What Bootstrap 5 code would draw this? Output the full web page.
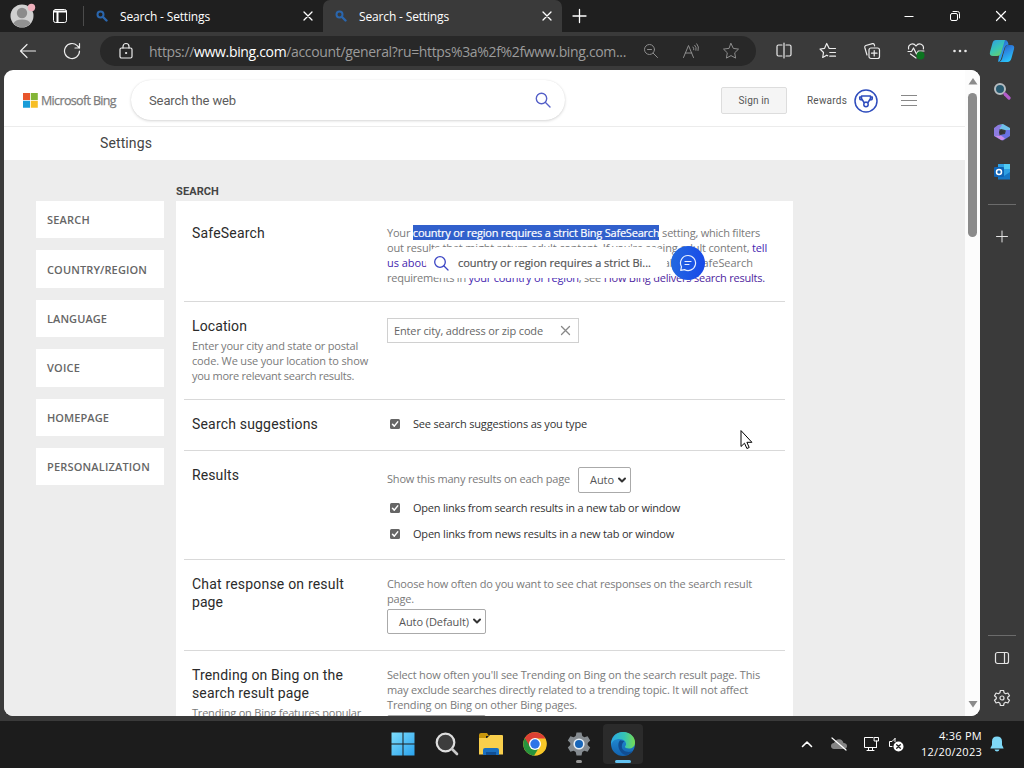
<!DOCTYPE html>
<html lang="en">
<head>
    <meta charset="UTF-8" />
    <meta name="viewport" content="width=device-width, initial-scale=1.0" />
    <title>Search - Settings</title>
    <link href="https://cdn.jsdelivr.net/npm/bootstrap@5.3.3/dist/css/bootstrap.min.css" rel="stylesheet" />
    <style>
        body {
            width: 1024px;
            height: 768px;
            overflow: hidden;
            background: #3a3a3a;
            font-family: "Open Sans", "Noto Sans", sans-serif;
            font-size: 11px;
            line-height: 15px;
            color: #7a7a7a;
        }

        svg {
            display: block;
            flex: none;
            fill: none;
            stroke-linecap: round;
            stroke-linejoin: round;
        }

        [data-w] {
            white-space: nowrap;
        }

        /* browser frame */
        .tab-strip {
            height: 32px;
            background: #1f1f1f;
            color: #fff;
            stroke: #fff;
            font-size: 12px;
        }

        .tab-strip svg, .tool-bar svg, .side-bar svg, .task-bar svg { stroke: inherit; }

        .browser-tab {
            width: 239px;
            height: 32px;
            padding: 0 9px 0 12px;
        }

        .browser-tab.current {
            background: #3a3a3a;
            border-radius: 7px 7px 0 0;
        }

        .tab-rule { width: 1px; height: 20px; background: #4b4b4b; }
        .slot46 { width: 46px; }
        .slot44 { width: 44px; }
        .slot40 { width: 40px; }

        .slot46, .slot44, .slot40 {
            flex: none;
            display: flex;
            align-items: center;
            justify-content: center;
        }

        .tool-bar {
            height: 38px;
            padding-left: 6px;
            stroke: #ececec;
        }

        .address-bar {
            width: 656px;
            height: 30px;
            margin-left: 6px;
            padding: 0 5px 0 18px;
            border-radius: 15px;
            background: #282828;
            color: #9b9b9b;
            font-size: 14px;
        }

        .address-bar b { font-weight: 400; color: #fff; }

        .view-port {
            width: 976px;
            height: 646px;
            margin-left: 4px;
            border-radius: 9px;
            background: #fff;
            overflow: hidden;
        }

        .side-bar { width: 44px; stroke: #e4e4e4; }
        .side-bar .side-rule { width: 28px; height: 1px; background: #6b6b6b; }

        /* bing header */
        .bing-head {
            height: 57px;
            padding-left: 19px;
            border-bottom: 1px solid #ececec;
        }

        .brand-text { font-size: 12.5px; color: #7c7c7c; -webkit-text-stroke: .25px #7c7c7c; }

        .search-box {
            width: 434px;
            height: 40px;
            margin-left: 15px;
            padding: 0 14px 0 18px;
            border-radius: 20px;
            box-shadow: 0 0 1px rgba(0, 0, 0, .1), 0 1px 3px rgba(0, 0, 0, .16);
            font: 13px Roboto, sans-serif;
            color: #5c5c5c;
        }

        .sign-in {
            width: 66px;
            height: 27px;
            margin-left: 156px;
            padding: 0;
            border: 1px solid #ddd;
            border-radius: 2px;
            background: #f5f5f5;
            font: 10px Roboto, sans-serif;
            color: #555;
        }

        .rewards { margin-left: 20px; font: 10px Roboto, sans-serif; color: #555; }

        .page-title {
            height: 33px;
            padding-left: 96px;
            font: 14px/32px Roboto, sans-serif;
            color: #444;
        }

        /* settings page */
        .page-body { width: 961px; height: 556px; background: #ededed; padding: 23px 0 0 32px; overflow: hidden; }
        .side-nav { width: 128px; margin-top: 18px; }

        .side-nav a {
            height: 37.4px;
            margin-bottom: 12px;
            padding-left: 11px;
            background: #fff;
            color: #666;
            font-size: 11px;
            font-weight: 600;
            text-decoration: none;
            display: flex;
            align-items: center;
        }

        .group-name { height: 18px; font: 700 11px/17px Roboto, sans-serif; color: #444; }
        .panel { width: 617px; background: #fff; padding: 0 8px; }

        .setting {
            border-bottom: 1px solid #d9d9d9;
            padding-left: 8px;
            overflow: hidden;
        }

        .setting .what { width: 195px; flex: none; margin-top: -1px; }

        .setting h2 {
            margin: 0;
            font: 14px/18px Roboto, sans-serif;
            color: #2b2b2b;
        }

        .h-safe { height: 101px; padding-top: 24px; }
        .h-loc { height: 98px; padding-top: 16px; }
        .h-sug { height: 51px; padding-top: 16px; }
        .h-res { height: 109px; padding-top: 16px; }
        .h-chat { height: 91px; padding-top: 16px; }
        .h-trend { height: 120px; padding-top: 16px; }

        .picked { background: #3160cc; color: #fff; }
        .picked, .hint-text { -webkit-text-stroke: .2px; }
        .lnk { color: #4526b0; }
        .lnk.visited { color: #4f1fa0; }

        .city-box {
            width: 192px;
            height: 25px;
            border: 1px solid #d0d0d0;
            padding: 0 7px 0 6px;
            color: #666;
        }

        .pick-list {
            height: 26px;
            border: 1px solid #aaa;
            border-radius: 2px;
            padding: 0 3px 1px 11px;
            color: #555;
            background: #fff;
        }

        .check-line { color: #333; gap: 13px; padding-left: 3px; }

        .tick {
            width: 10px;
            height: 10px;
            margin-top: 1px;
            border-radius: 1.5px;
            background: #666;
        }

        /* search bubble over the selected text */
        .hint {
            position: absolute;
            left: 426px;
            top: 247px;
            width: 241px;
            height: 31px;
            padding: 0 7px;
            gap: 9px;
            border-radius: 14px;
            background: #fff;
            color: #555;
        }

        .chat-dot {
            position: absolute;
            left: 671px;
            top: 246px;
            width: 34px;
            height: 34px;
            border-radius: 50%;
            background: linear-gradient(100deg, #246bdf, #1747ea);
        }

        .pointer { position: absolute; left: 740px; top: 430px; }

        .scroller { width: 15px; padding-top: 8px; background: #fcfcfc; }
        .scroller path { fill: #8b8b8b; }
        .scroller .thumb { width: 9px; height: 144px; border-radius: 5px; background: #8b8b8b; margin-top: 8px; }

        /* taskbar */
        .task-bar {
            height: 47px;
            margin-top: 5px;
            padding: 0 0 1px 381px;
            background: #1c1c1c;
            stroke: #fff;
        }

        .app-tile { width: 40px; height: 40px; border-radius: 4px; background: #2b2b2b; }
        .app-bar { width: 16px; height: 3px; border-radius: 2px; background: #62c1f0; }
        .clock { width: 74px; color: #fff; font-size: 11px; line-height: 16px; }
    </style>
</head>
<body class="d-flex flex-column">

<!-- Tabs -->
<div class="tab-strip d-flex align-items-center">
    <svg width="83" height="32">
        <circle cx="22" cy="16" r="11.5" fill="#d0d0d0" stroke="none"/>
        <circle cx="22" cy="13" r="5.2" fill="#8b8b8b" stroke="none"/>
        <path d="M13.5 23.5q1.500-4 8.500-4t8.500 4a11.500 11.500 0 0 1-17 0z" fill="#929292" stroke="none"/>
        <circle cx="31.500" cy="7.500" r="3.700" fill="#efb0bc" stroke="none"/>
        <rect x="53.500" y="9.500" width="13" height="13" rx="2"/>
        <path d="M54 11.500h12M57.500 12v10" stroke-width="2"/>
    </svg>
    <div class="tab-rule"></div>
    <div class="browser-tab d-flex align-items-center">
        <svg width="12" height="12" style="stroke:#2a66ad"><circle cx="4.500" cy="4.500" r="3" stroke-width="2"/><path d="M7 7l3.500 3.500" stroke-width="2.400"/></svg>
        <span class="ms-2 ps-1" data-w="94">Search - Settings</span>
        <svg class="ms-auto" width="12" height="12"><path d="M2 2l8 8M10 2l-8 8" stroke-width="1.300"/></svg>
    </div>
    <div class="browser-tab current d-flex align-items-center">
        <svg width="12" height="12" style="stroke:#2a66ad"><circle cx="4.500" cy="4.500" r="3" stroke-width="2"/><path d="M7 7l3.500 3.500" stroke-width="2.400"/></svg>
        <span class="ms-2 ps-1" data-w="94">Search - Settings</span>
        <svg class="ms-auto" width="12" height="12"><path d="M2 2l8 8M10 2l-8 8" stroke-width="1.300"/></svg>
    </div>
    <svg class="ms-2" width="18" height="18"><path d="M9.500 2.500v13M3 9h13" stroke-width="1.300"/></svg>
    <div class="d-flex ms-auto">
        <div class="slot46"><svg width="12" height="12"><path d="M1.500 6.500h9" stroke-linecap="butt"/></svg></div>
        <div class="slot46"><svg width="12" height="12"><rect x="1.500" y="3.500" width="7" height="7" rx="1.500"/><path d="M4 1.500h4.500a2 2 0 0 1 2 2V8"/></svg></div>
        <div class="slot46"><svg width="12" height="12"><path d="M1.500 1.500l9 9M10.500 1.500l-9 9" stroke-width="1.200"/></svg></div>
    </div>
</div>

<!-- Toolbar -->
<div class="tool-bar d-flex align-items-center">
    <div class="slot44"><svg width="18" height="16"><path d="M16.500 8H1.500M8 1.500L1.500 8 8 14.500" stroke-width="1.200"/></svg></div>
    <div class="slot44"><svg width="18" height="18"><path d="M16.500 9a7.500 7.500 0 1 1-2.300-5.400L16.500 6M16.500 1.500V6H12" stroke-width="1.200"/></svg></div>
    <div class="address-bar d-flex align-items-center">
        <svg width="16" height="18"><rect x="2" y="6" width="12" height="10" rx="1.500" stroke-width="1.200"/><path d="M5 6V4.500a3 3 0 0 1 6 0V6" stroke-width="1.200"/><circle cx="8" cy="11" r=".6" fill="#fff"/></svg>
        <span style="margin-left:15px" data-w="477">https://<b>www.bing.com</b>/account/general?ru=https%3a%2f%2fwww.bing.com...</span>
        <div class="d-flex ms-auto" style="stroke:#8d8d8d">
            <div class="slot40"><svg width="16" height="16"><circle cx="6.500" cy="6.500" r="5"/><path d="M4.500 6.500h4M10.200 10.200l4.300 4.300"/></svg></div>
            <div class="slot40"><svg width="18" height="16"><path d="M1.500 14.500L6.500 2.500 11.500 14.500M3.300 10h6.500M11 4q1 1 .8 2.800M12.800 2.300q2 2 1.200 5M14.800.8q2.600 3 1.300 6.700"/></svg></div>
            <div class="slot40"><svg width="18" height="18"><path d="M9 1.500l2.300 4.900 5.200.7-3.800 3.700.9 5.300L9 13.600l-4.600 2.500.9-5.300L1.500 7.100l5.200-.7z"/></svg></div>
        </div>
    </div>
    <div class="d-flex" style="margin-left:6px">
        <div class="slot44"><svg width="16" height="18"><path d="M6 3H2.500Q1 3 1 4.500v8Q1 14 2.500 14H6M10 3h3.500Q15 3 15 4.500v8q0 1.500-1.500 1.500H10M8 1v15" stroke-width="1.200"/></svg></div>
        <div class="slot44"><svg width="18" height="18"><path d="M16.500 6.500H10.200L7.700 1.500 5.600 6.300 1 7l3.500 3.500-.8 5 4-2.300 1 .6M10.800 10.500h5.700M10.800 14.200h5.700" stroke-width="1.200"/></svg></div>
        <div class="slot44"><svg width="18" height="18"><rect x="6" y="6" width="10.500" height="10.500" rx="2" stroke-width="1.200"/><path d="M11.200 8.500v5.500M8.500 11.200H14M4 13L1.800 5.500q-.4-1.500 1-2L9.500 1.600q1.300-.3 1.800 1l.3 1.200" stroke-width="1.200"/></svg></div>
        <div class="slot44"><svg width="18" height="18"><path d="M1.600 7C.8 2.500 6-.2 9 4c3-4.200 8.200-1.500 7.400 3M1 9.500h3.500L6.500 6l3 6 1.700-3H17M3.500 12L9 16" stroke-width="1.200"/><circle cx="13.500" cy="13.500" r="4" fill="#0c7520" stroke="none"/></svg></div>
        <div class="slot44"><svg width="16" height="4" style="stroke:none;fill:#e8e8e8"><circle cx="2.500" cy="2" r="1.300"/><circle cx="8" cy="2" r="1.300"/><circle cx="13.500" cy="2" r="1.300"/></svg></div>
        <div class="slot40"><svg width="26" height="26" style="stroke:none">
            <defs>
                <linearGradient id="cpA" x2=".6" y2="1"><stop stop-color="#2f9be8"/><stop offset=".6" stop-color="#39c6b4"/><stop offset="1" stop-color="#65cc70"/></linearGradient>
                <linearGradient id="cpB" x2=".5" y2="1"><stop stop-color="#174e9c"/><stop offset=".4" stop-color="#2d7ddd"/><stop offset="1" stop-color="#29c2f8"/></linearGradient>
            </defs>
            <path d="M13 2h3q2 0 2.800 2l.8 2.500q-3 .2-4 3L12 21q-1 3-3 3z" fill="url(#cpB)"/>
            <path d="M7 2h9l-4 13q-1 3-4 3H4q-4 0-3-4L3.500 5Q4.300 2 7 2z" fill="url(#cpA)"/>
            <path d="M18 7h4q4 0 3 4l-2.500 9q-1 4-4 4H10q2 0 3-3l3-11q.7-3 2-3z" fill="url(#cpB)"/>
        </svg></div>
    </div>
</div>

<!-- Page and side bar -->
<div class="d-flex">
    <div class="view-port d-flex">
        <div>
            <div class="bing-head d-flex align-items-center">
                <svg width="15" height="15" style="margin-top:4px"><path fill="#e8562c" d="M0 0h7v7H0z"/><path fill="#83b536" d="M7.800 0h7v7h-7z"/><path fill="#199cd8" d="M0 7.800h7v7H0z"/><path fill="#f7be25" d="M7.800 7.800h7v7h-7z"/></svg>
                <div class="brand-text" style="margin:4px 0 0 3px" data-w="75">Microsoft Bing</div>
                <div class="search-box d-flex align-items-center mt-1">
                    <span data-w="87">Search the web</span>
                    <svg class="ms-auto" width="16" height="16" stroke="#5560c8" stroke-width="1.400"><circle cx="6.500" cy="6.500" r="5.200"/><path d="M10.500 10.500l4.500 4.500"/></svg>
                </div>
                <button class="sign-in" style="margin-top:5px"><span data-w="31">Sign in</span></button>
                <div class="rewards d-flex align-items-center" style="margin-top:5px">
                    <span data-w="40">Rewards</span>
                    <svg style="margin-left:7px" width="24" height="24" stroke="#2f4dbd" stroke-width="1.500"><circle cx="12" cy="12" r="11"/><path d="M7.500 7h9v2.500l-2.500 4h-4l-2.500-4zM7.500 8H5.700v1.500q0 1.500 2.300 1.500M16.500 8h1.800v1.500q0 1.500-2.300 1.500"/><circle cx="12" cy="15.500" r="2.200" fill="#fff"/></svg>
                    <svg style="margin-left:23px" width="16" height="13" stroke="#888" stroke-width="1.200"><path d="M.5 1.500h15M.5 6.500h15M.5 11.500h15"/></svg>
                </div>
            </div>
            <div class="page-title"><span data-w="52">Settings</span></div>

            <div class="page-body d-flex">
                <nav class="side-nav">
                    <a href="#"><span data-w="43">SEARCH</span></a>
                    <a href="#"><span data-w="100">COUNTRY/REGION</span></a>
                    <a href="#"><span data-w="60">LANGUAGE</span></a>
                    <a href="#"><span data-w="33">VOICE</span></a>
                    <a href="#"><span data-w="62">HOMEPAGE</span></a>
                    <a href="#"><span data-w="103">PERSONALIZATION</span></a>
                </nav>
                <div style="margin-left:12px">
                    <div class="group-name"><span data-w="43">SEARCH</span></div>
                    <div class="panel">
                        <div class="setting h-safe d-flex">
                            <div class="what"><h2><span data-w="73">SafeSearch</span></h2></div>
                            <div>
                                <div><span data-w="373">Your <span class="picked">country or region requires a strict Bing SafeSearch</span> setting, which filters</span></div>
                                <div><span data-w="380">out results that might return adult content. If you're seeing adult content, <span class="lnk">tell</span></span></div>
                                <div><span data-w="366"><span class="lnk">us about</span> it so we can filter it in the future. Learn more about SafeSearch</span></div>
                                <div><span data-w="378">requirements in <span class="lnk">your country or region</span>, see <span class="lnk visited">How Bing delivers search results.</span></span></div>
                            </div>
                        </div>
                        <div class="setting h-loc d-flex">
                            <div class="what">
                                <h2><span data-w="55">Location</span></h2>
                                <div style="margin-top:3px"><span data-w="166">Enter your city and state or postal</span></div>
                                <div><span data-w="176">code. We use your location to show</span></div>
                                <div><span data-w="162">you more relevant search results.</span></div>
                            </div>
                            <div class="city-box d-flex align-items-center">
                                <span data-w="149">Enter city, address or zip code</span>
                                <svg class="ms-auto" width="11" height="11" stroke="#888" stroke-width="1.300"><path d="M1.500 1.500l8 8M9.500 1.500l-8 8"/></svg>
                            </div>
                        </div>
                        <div class="setting h-sug d-flex">
                            <div class="what"><h2><span data-w="126">Search suggestions</span></h2></div>
                            <div class="check-line d-flex align-items-center align-self-start">
                                <div class="tick"><svg width="10" height="10" stroke="#fff" stroke-width="1.500"><path d="M2.500 5.300l1.800 1.800 3.400-4.200"/></svg></div>
                                <span data-w="174">See search suggestions as you type</span>
                            </div>
                        </div>
                        <div class="setting h-res d-flex">
                            <div class="what"><h2><span data-w="47">Results</span></h2></div>
                            <div>
                                <div class="d-flex align-items-center">
                                    <span class="pb-1" data-w="183">Show this many results on each page</span>
                                    <div class="pick-list d-flex align-items-center justify-content-between ms-2" style="width:53px"><span data-w="24">Auto</span><svg width="10" height="8" stroke="#333" stroke-width="2"><path d="M2 2.500l3 3 3-3"/></svg></div>
                                </div>
                                <div class="check-line d-flex align-items-center" style="margin-top:7px">
                                    <div class="tick"><svg width="10" height="10" stroke="#fff" stroke-width="1.500"><path d="M2.500 5.300l1.800 1.800 3.400-4.200"/></svg></div>
                                    <span data-w="267">Open links from search results in a new tab or window</span>
                                </div>
                                <div class="check-line d-flex align-items-center" style="margin-top:11px">
                                    <div class="tick"><svg width="10" height="10" stroke="#fff" stroke-width="1.500"><path d="M2.500 5.300l1.800 1.800 3.400-4.200"/></svg></div>
                                    <span data-w="261">Open links from news results in a new tab or window</span>
                                </div>
                            </div>
                        </div>
                        <div class="setting h-chat d-flex">
                            <div class="what">
                                <h2><span data-w="152">Chat response on result</span></h2>
                                <h2><span data-w="31">page</span></h2>
                            </div>
                            <div>
                                <div><span data-w="365">Choose how often do you want to see chat responses on the search result</span></div>
                                <div><span data-w="27">page.</span></div>
                                <div class="pick-list d-flex align-items-center justify-content-between" style="width:99px;height:25px;margin-top:3px"><span data-w="70">Auto (Default)</span><svg width="10" height="8" stroke="#333" stroke-width="2"><path d="M2 2.500l3 3 3-3"/></svg></div>
                            </div>
                        </div>
                        <div class="setting h-trend d-flex">
                            <div class="what">
                                <h2><span data-w="151">Trending on Bing on the</span></h2>
                                <h2><span data-w="117">search result page</span></h2>
                                <div style="margin-top:3px"><span data-w="169">Trending on Bing features popular</span></div>
                            </div>
                            <div>
                                <div><span data-w="373">Select how often you'll see Trending on Bing on the search result page. This</span></div>
                                <div><span data-w="361">may exclude searches directly related to a trending topic. It will not affect</span></div>
                                <div><span data-w="190">Trending on Bing on other Bing pages.</span></div>
                                <div class="pick-list" style="width:99px;margin-top:3px"></div>
                            </div>
                        </div>
                    </div>
                </div>
            </div>
        </div>
        <div class="scroller d-flex flex-column align-items-center">
            <svg width="10" height="7"><path d="M5 0l4.500 6.500h-9z"/></svg>
            <div class="thumb"></div>
            <svg class="mt-auto mb-2" width="10" height="7"><path d="M5 6.500L.5 0h9z"/></svg>
        </div>
    </div>

    <div class="side-bar d-flex flex-column align-items-center">
        <svg style="margin-top:12px" width="18" height="18"><circle cx="7" cy="7" r="5" stroke="#b6bcc0" stroke-width="2" fill="#285a70"/><path d="M12 12l4 4" stroke="#b45ccb" stroke-width="3.200"/></svg>
        <svg style="margin-top:23px;stroke:none" width="18" height="18">
            <path d="M5 2l5-1 7 4v5l-5-3-4-1-3 3z" fill="#6fc0ea"/>
            <path d="M5 2L1 5v8l7 4 1-4-3-3 1-5 2-3z" fill="#8c7be0"/>
            <path d="M17 7v6l-7 4.500-7-4 4-1.500 5-1 1-4z" fill="#6a72e2"/>
            <path d="M2 13l7 4.500 3-2-4-3z" fill="#c98be8"/>
            <path d="M6.500 6l5 3-5 3.500z" fill="#333"/>
        </svg>
        <svg style="margin-top:22px;stroke:none" width="18" height="18">
            <path d="M5 1h12v15H5z" fill="#2e9fe2"/><path d="M11 1h6v5h-6z" fill="#50cbf4"/><path d="M5 10l6 3 6-4v7.500H5z" fill="#1576c4"/>
            <rect x="1" y="4" width="10" height="10" rx="1" fill="#0f63b4"/><circle cx="6" cy="9" r="2.500" stroke="#fff" stroke-width="1.500"/>
        </svg>
        <div class="side-rule" style="margin-top:23px"></div>
        <svg style="margin-top:25px" width="13" height="13"><path d="M6 1v11M.5 6.500h11"/></svg>
        <div class="side-rule" style="margin-top:392px"></div>
        <svg style="margin-top:15px" width="16" height="14"><rect x="1.500" y="1.500" width="13" height="11" rx="2" stroke-width="1.200"/><path d="M10.500 1.500v11" stroke-width="1.200"/></svg>
        <svg style="margin-top:24px" width="18" height="18" stroke-width="1.200"><path d="M7.400 1.500h3.200l.5 2.300 1.500.9 2.300-.7 1.600 2.700-1.800 1.600v1.400l1.800 1.600-1.600 2.700-2.300-.7-1.500.9-.5 2.300H7.400l-.5-2.300-1.500-.9-2.300.7-1.600-2.700 1.800-1.600V8.300L1.500 6.700 3.100 4l2.300.7 1.500-.9z"/><circle cx="9" cy="9" r="2"/></svg>
    </div>
</div>

<!-- Taskbar -->
<div class="task-bar d-flex align-items-center">
    <div class="slot44"><svg width="24" height="24" style="stroke:none"><defs><linearGradient id="win" x2="1" y2="1"><stop stop-color="#7ddcfb"/><stop offset="1" stop-color="#2aa3ee"/></linearGradient></defs><path fill="url(#win)" d="M.5.500h11v11H.5zM12.500.500h11v11h-11zM.5 12.500h11v11H.5zM12.500 12.500h11v11h-11z"/></svg></div>
    <div class="slot44"><svg width="24" height="24"><circle cx="10.500" cy="10.500" r="8.800" fill="#3d3d3d" stroke="#dedede" stroke-width="2.200"/><path d="M17 17l5 5" stroke="#c9c9c9" stroke-width="2.600"/></svg></div>
    <div class="slot44"><svg width="26" height="24" style="stroke:none"><path d="M1 3q0-2 2-2h6l2 3h-3v4H1z" fill="#c8960c"/><path d="M1 6h8l3-3h12q1 0 1 1v18.500H1z" fill="#f9cf4c"/><path d="M5 23v-5q0-2 2-2h12q2 0 2 2v5z" fill="#1a6fc0"/><path d="M8 20h10v3H8z" fill="#114f94"/></svg></div>
    <div class="slot44"><svg width="24" height="24" style="stroke:none"><circle cx="12" cy="12" r="11.800" fill="#f8c828"/><path d="M12 12L1.800 6.100A11.800 11.800 0 0 0 11 23.700l5.500-9z" fill="#27933d"/><path d="M1.800 6.100A11.800 11.800 0 0 1 22.500 6.500H12L7 14.500z" fill="#dc4034"/><circle cx="12" cy="12" r="6" fill="#fff"/><circle cx="12" cy="12" r="4.700" fill="#2d74e8"/></svg></div>
    <div class="slot44 flex-column">
        <svg style="margin-top:7px;stroke:none" width="24" height="24"><path d="M9.500.500h5l.8 3.500 2 1.200 3.300-1 2.600 4.300-2.500 2.500v2l2.500 2.500-2.600 4.300-3.300-1-2 1.200-.8 3.500h-5L8.700 20l-2-1.200-3.300 1L.8 15.500 3.300 13v-2L.8 8.500l2.600-4.300 3.300 1 2-1.200z" fill="#858b90"/><circle cx="12" cy="12" r="5.600" fill="#e6eef5"/><circle cx="12" cy="12" r="4" fill="#1765b8"/></svg>
        <svg style="margin-top:4px;stroke:none" width="6" height="3"><rect width="6" height="3" rx="1.500" fill="#969696"/></svg>
    </div>
    <div class="slot44"><div class="app-tile d-flex flex-column align-items-center">
        <svg style="margin-top:7px;stroke:none" width="26" height="26">
            <defs>
                <linearGradient id="egA" y2="0"><stop stop-color="#2aa8e4"/><stop offset=".55" stop-color="#35c4b4"/><stop offset="1" stop-color="#76dc51"/></linearGradient>
                <linearGradient id="egB" x2="0" y2="1"><stop stop-color="#2695db"/><stop offset="1" stop-color="#1262af"/></linearGradient>
            </defs>
            <circle cx="13" cy="13" r="12" fill="url(#egB)"/>
            <path d="M1.200 11C2.500 4.500 7 1 13 1c8 0 12 5.500 12 10.500 0 4-3 6-6 6-2.500 0-4.500-1-4-2 1-1.300 1.200-2 1-3C15.500 9.500 13 8 9.500 8 5 8 2 10 1.200 14z" fill="url(#egA)"/>
            <path d="M10 9.200c-3 3.500-2 10 3 13.800 4 2 7 .5 9.800-3-4 2-11 .8-11-4.500 0-2.500 1.200-4.500 2.700-5.500z" fill="#114d92"/>
        </svg>
        <div class="app-bar" style="margin-top:3px"></div>
    </div></div>

    <div class="d-flex align-items-center ms-auto" style="margin-right:20px">
        <svg width="12" height="8"><path d="M1.500 6.500L6 2l4.500 4.500" stroke-width="1.600"/></svg>
        <svg style="margin-left:17px" width="18" height="14"><path d="M4 12q-3-.3-3-3t3-3q1.500-3.800 5-3.800T13.500 6q3.500.3 3.500 3t-3 3z" fill="#858585" stroke="none"/><path d="M2 1l14 12" stroke-width="1.200"/></svg>
        <svg style="margin-left:14px" width="18" height="18"><path d="M11 2.500H2.500v10h12V9M5 15.500h7M6.500 13v2.500M10.500 13v2.500M12.500 2.500h4v3.500h-4zM14.500 6v6.500"/></svg>
        <svg style="margin-left:8px" width="16" height="16"><path d="M7 2.500L4 5.500H1.500v5H4M7 2.500v3"/><circle cx="10.500" cy="10.500" r="5" fill="#fff" stroke="none"/><path d="M8.700 8.700l3.600 3.600M12.300 8.700l-3.600 3.600" stroke="#222" stroke-width="1.300"/></svg>
        <div class="clock text-end" style="margin-left:4px"><div><span data-w="43">4:36 PM</span></div><div><span data-w="61">12/20/2023</span></div></div>
        <svg style="margin-left:8px;stroke:none" width="14" height="16"><path d="M7 .5Q2 .5 2 5.500v3.500L.5 12v.5h13V12L12 9V5.500Q12 .5 7 .5zM4.500 13.500Q5 15.500 7 15.500t2.500-2z" fill="#7fd8f6"/></svg>
    </div>
</div>

<!-- Overlays -->
<div class="hint d-flex align-items-center">
    <svg width="16" height="16" stroke="#3b45c4" stroke-width="1.300"><circle cx="7" cy="7" r="5.300"/><path d="M11 11l4 4"/></svg>
    <span class="hint-text" data-w="193">country or region requires a strict Bi...</span>
</div>
<div class="chat-dot d-flex align-items-center justify-content-center">
    <svg width="18" height="18" stroke="#e8f0ff" stroke-width="1.200"><path d="M9 1.500a7.500 7.500 0 1 1-3.500 14.100L1.700 16.400l.8-3.700A7.500 7.500 0 0 1 9 1.500zM6 7.500h6M6 10.500h4"/></svg>
</div>
<svg class="pointer" width="13" height="20" stroke="#000"><path fill="#fff" d="M1 1v15.500l3.500-3.300 2.400 5.300 2.300-1-2.300-5.200h4.600z"/></svg>

<script src="https://cdn.jsdelivr.net/npm/bootstrap@5.3.3/dist/js/bootstrap.bundle.min.js"></script>
<script>
    // Spread each label's letters so that it fills its width
    document.querySelectorAll("[data-w]").forEach(function (label) {
        const width = label.getBoundingClientRect().width;
        const gap = (label.dataset.w - width) / label.textContent.length;
        label.style.letterSpacing = gap + "px";
    });
</script>

</body>
</html>
